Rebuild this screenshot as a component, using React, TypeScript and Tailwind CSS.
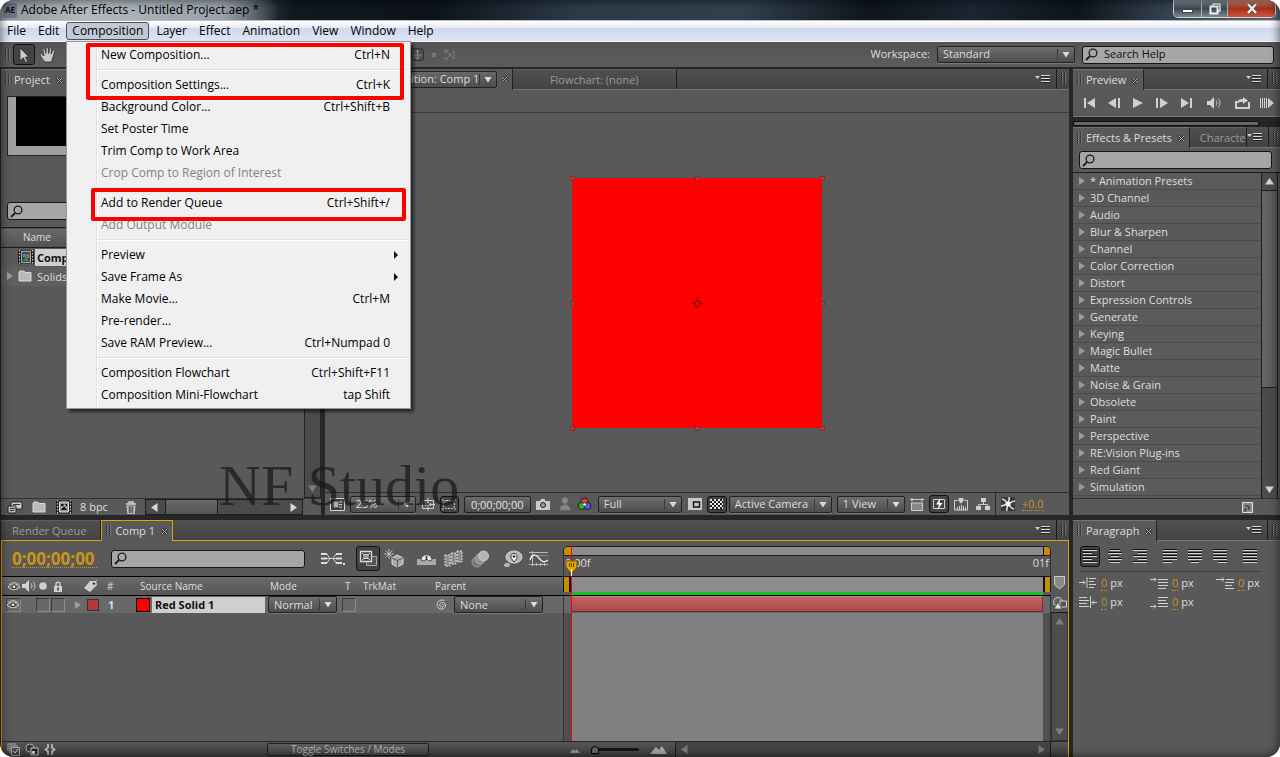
import type { ReactNode } from 'react';

type MenuEntry = { label: string; keys?: string; disabled?: boolean; submenu?: boolean } | 'separator';

const menus = ['File', 'Edit', 'Composition', 'Layer', 'Effect', 'Animation', 'View', 'Window', 'Help'];

const compositionMenu: MenuEntry[] = [
  { label: 'New Composition...', keys: 'Ctrl+N' },
  'separator',
  { label: 'Composition Settings...', keys: 'Ctrl+K' },
  { label: 'Background Color...', keys: 'Ctrl+Shift+B' },
  { label: 'Set Poster Time' },
  { label: 'Trim Comp to Work Area' },
  { label: 'Crop Comp to Region of Interest', disabled: true },
  'separator',
  { label: 'Add to Render Queue', keys: 'Ctrl+Shift+/' },
  { label: 'Add Output Module', disabled: true },
  'separator',
  { label: 'Preview', submenu: true },
  { label: 'Save Frame As', submenu: true },
  { label: 'Make Movie...', keys: 'Ctrl+M' },
  { label: 'Pre-render...' },
  { label: 'Save RAM Preview...', keys: 'Ctrl+Numpad 0' },
  'separator',
  { label: 'Composition Flowchart', keys: 'Ctrl+Shift+F11' },
  { label: 'Composition Mini-Flowchart', keys: 'tap Shift' },
];

const effects = [
  '* Animation Presets',
  '3D Channel',
  'Audio',
  'Blur & Sharpen',
  'Channel',
  'Color Correction',
  'Distort',
  'Expression Controls',
  'Generate',
  'Keying',
  'Magic Bullet',
  'Matte',
  'Noise & Grain',
  'Obsolete',
  'Paint',
  'Perspective',
  'RE:Vision Plug-ins',
  'Red Giant',
  'Simulation',
];

/* ---------- small drawings ---------- */

interface IconProps {
  w?: number;
  h?: number;
  className?: string;
  children: ReactNode;
}

function Icon({ w = 16, h = 16, className = '', children }: IconProps) {
  return (
    <svg
      width={w}
      height={h}
      viewBox={`0 0 ${w} ${h}`}
      fill="none"
      stroke="#d0d0d0"
      className={`shrink-0 ${className}`}
      aria-hidden="true"
    >
      {children}
    </svg>
  );
}

function Grip() {
  return (
    <Icon w={5} h={12}>
      <path d="M.5 0v12M3.500 0v12" stroke="#1c1c1c" strokeDasharray="1 1" />
      <path d="M1.500 0v12M4.500 0v12" stroke="#8c8c8c" strokeDasharray="1 1" />
    </Icon>
  );
}

function CloseX() {
  return (
    <Icon w={7} h={7}>
      <path d="M1 1l5 5M6 1l-5 5" stroke="#1e1e1e" strokeWidth="2" />
      <path d="M1 1l5 5M6 1l-5 5" stroke="#c4c4c4" strokeWidth="1" />
    </Icon>
  );
}

function PanelMenu() {
  return (
    <button aria-label="Panel menu" className="flex items-center">
      <Icon w={15} h={10}>
        <path d="M0 2h5L2.500 5z" fill="#d0d0d0" stroke="none" />
        <path d="M6 1.500h9M6 4.500h9M6 7.500h9" stroke="#d8d8d8" />
        <path d="M6 2.500h9M6 5.500h9M6 8.500h9" stroke="#222" />
      </Icon>
    </button>
  );
}

function Lens({ className = '' }: { className?: string }) {
  return (
    <Icon w={13} h={13} className={className}>
      <circle cx="8" cy="5" r="3.900" stroke="#1a1a1a" strokeWidth="1.300" />
      <path d="M5.200 7.800L1 12" stroke="#1a1a1a" strokeWidth="1.800" />
    </Icon>
  );
}

function Triangle() {
  return (
    <Icon w={6} h={8}>
      <path d="M0 0l6 4-6 4z" fill="#9c9c9c" stroke="none" />
    </Icon>
  );
}

type Dir = 'up' | 'down' | 'left' | 'right';

const arrowPaths: Record<Dir, string> = {
  up: 'M0 7.500L4.500 1 9 7.500z',
  down: 'M0 1.500L4.500 8 9 1.500z',
  left: 'M7.500 0L1 4.500 7.500 9z',
  right: 'M1.500 0L8 4.500 1.500 9z',
};

function Arrow({ dir, dim }: { dir: Dir; dim?: boolean }) {
  return (
    <Icon w={9} h={9}>
      <path d={arrowPaths[dir]} fill={dim ? '#7c7c7c' : '#d4d4d4'} stroke="none" />
    </Icon>
  );
}

function DropArrow() {
  return (
    <span className="pointer-events-none absolute inset-y-[2px] right-0 flex w-[17px] items-center border-l border-[#3a3a3a] pl-[4px]">
      <Icon w={9} h={7}>
        <path d="M.5 1h7L4 6.500z" fill="#dcdcdc" stroke="none" />
      </Icon>
    </span>
  );
}

function Eye() {
  return (
    <Icon w={12} h={9}>
      <path d="M0 5C2.500 1 9.500 1 12 5 9.500 8.500 2.500 8.500 0 5z" fill="#777" strokeWidth="1" />
      <circle cx="6" cy="4.800" r="2" fill="#e0e0e0" stroke="#222" />
      <path d="M1 2.500C4 0 8 0 11 2.500" stroke="#ccc" strokeWidth=".8" />
    </Icon>
  );
}

function Speaker() {
  return (
    <Icon w={14} h={12}>
      <path d="M0 4h3l4-4v12L3 8H0z" fill="#d4d4d4" stroke="none" />
      <path d="M9 3.500c1.300 1.500 1.300 3.500 0 5M11 1.500c2.600 2.500 2.600 6.500 0 9" />
    </Icon>
  );
}

/* ---------- building blocks ---------- */

interface TabProps {
  label: string;
  active?: boolean;
  accent?: boolean;
  className?: string;
}

function Tab({ label, active, accent, className = '' }: TabProps) {
  const look = active
    ? accent
      ? 'bg-[#595959] border border-b-0 border-[#e5a000] text-[#dedede] -mb-px'
      : 'bg-[#595959] border-t border-[#747474] border-r border-r-[#222] text-[#dedede] -mb-px'
    : 'border-t border-t-[#5e5e5e] border-r border-r-[#1c1c1c] text-[#9b9b9b]';
  return (
    <button className={`flex items-center gap-1 whitespace-nowrap px-1 text-[11px] leading-[18px] ${look} ${className}`}>
      {active && <Grip />}
      {label}
      {active && (
        <span className="pl-[2px]">
          <CloseX />
        </span>
      )}
    </button>
  );
}

function TabBar({ children, accent }: { children: ReactNode; accent?: boolean }) {
  return (
    <div
      className={`flex h-[21px] shrink-0 border-b bg-[linear-gradient(#505050,#434343)] ${
        accent ? 'border-[#e5a000]' : 'border-[#747474]'
      }`}
    >
      {children}
      <div className="ml-auto flex items-center gap-[6px] pr-[3px]">
        <PanelMenu />
        <span className="flex h-full items-center border-l border-[#1c1c1c] pl-[4px]">
          <Grip />
        </span>
      </div>
    </div>
  );
}

function Drop({ label, value, className = '' }: { label: string; value: string; className?: string }) {
  return (
    <label
      className={`relative flex h-[17px] shrink-0 items-center rounded-[2px] border border-[#222] bg-[linear-gradient(#6e6e6e,#4d4d4d)] shadow-[0_1px_0_#777] ${className}`}
    >
      <span className="sr-only">{label}</span>
      <select className="w-full appearance-none bg-transparent pl-[5px] text-[11px] text-[#dedede] outline-none">
        <option>{value}</option>
      </select>
      <DropArrow />
    </label>
  );
}

function SearchBox({ label, value, className = '' }: { label: string; value?: string; className?: string }) {
  return (
    <label
      className={`flex h-[18px] shrink-0 items-center gap-[6px] rounded-[3px] border border-[#151515] bg-[#a6a6a6] pl-[2px] ${className}`}
    >
      <Lens />
      <span className="sr-only">{label}</span>
      <input className="min-w-0 flex-1 bg-transparent text-[11px] text-[#111] outline-none" defaultValue={value} />
    </label>
  );
}

function Boxed({ label, className = '', children }: { label: string; className?: string; children: ReactNode }) {
  return (
    <button
      aria-label={label}
      className={`flex shrink-0 items-center justify-center rounded-[3px] border border-[#111] bg-[#434343] ${className}`}
    >
      {children}
    </button>
  );
}

/* ---------- window chrome ---------- */

function TitleBar() {
  return (
    <header className="flex h-[21px] shrink-0 border-b border-[#b5bcc4] bg-[linear-gradient(100deg,#7b8288_0%,#59616a_16%,#101820_23%,#0c131b_34%,#2c3a48_45%,#31404e_58%,#0d141c_68%,#1b2632_76%,#0d141c_84%,#3a4856_92%,#5a6570_100%)]">
      <div className="flex items-center rounded-r-full bg-[linear-gradient(90deg,#8b939a,#b2bac0_30%,#98a1a9_80%,rgba(60,68,76,0))] pl-[3px] pr-5">
        <span className="mr-[4px] flex h-[15px] w-[14px] items-center justify-center rounded-[2px] bg-[#6d7582] text-[8px] font-bold text-[#0d0f14]">
          AE
        </span>
        <h1 className="text-[12px] leading-[20px] text-black">Adobe After Effects - Untitled Project.aep *</h1>
      </div>
      <div className="ml-auto mr-1 flex h-[18px] overflow-hidden rounded-b-[5px] border border-t-0 border-[#cfd4d8]">
        <button
          aria-label="Minimize"
          className="flex w-[28px] items-center justify-center border-r border-[#aab2b9] bg-[linear-gradient(#8a949d,#3d4854_50%,#7b8793)]"
        >
          <span className="mt-1 h-[4px] w-[11px] border border-[#444] bg-white" />
        </button>
        <button
          aria-label="Restore"
          className="flex w-[26px] items-center justify-center border-r border-[#aab2b9] bg-[linear-gradient(#8a949d,#3d4854_50%,#7b8793)]"
        >
          <Icon w={12} h={12}>
            <path d="M4 3V1h7v7H9" stroke="#e8e8e8" strokeWidth="1.400" />
            <path d="M1.500 3.500h7v7h-7z" stroke="#f2f2f2" strokeWidth="2" />
          </Icon>
        </button>
        <button
          aria-label="Close"
          className="flex w-[47px] items-center justify-center bg-[linear-gradient(#c98a7d,#a8321c_50%,#c9563f)]"
        >
          <Icon w={12} h={11}>
            <path d="M2 1l8 9M10 1l-8 9" stroke="#444" strokeWidth="4" />
            <path d="M2 1l8 9M10 1l-8 9" stroke="#f2f2f2" strokeWidth="2.600" />
          </Icon>
        </button>
      </div>
    </header>
  );
}

function MenuBar() {
  return (
    <nav className="flex h-[21px] shrink-0 items-center border-b border-[#f4f4f4] bg-[linear-gradient(#ffffff,#e6eaf5_35%,#cfd8ec_36%,#dfe5f6)] pl-px">
      {menus.map((name) => (
        <button
          key={name}
          className={`h-[18px] rounded-[3px] border px-[5px] text-[12px] leading-[16px] text-black ${
            name === 'Composition' ? 'mx-px border-[#4c4f58] bg-[#c3c8d6]' : 'border-transparent'
          }`}
        >
          {name}
        </button>
      ))}
    </nav>
  );
}

function CompositionMenu() {
  return (
    <div className="absolute left-[66px] top-[41px] z-20 w-[345px] border border-[#979797] bg-[#f0f0f0] p-[2px] shadow-[3px_3px_3px_rgba(0,0,0,0.55)]">
      <ul
        role="menu"
        className="bg-[linear-gradient(90deg,transparent_27px,#e0e0e0_27px,#e0e0e0_28px,#fff_28px,#fff_29px,transparent_29px)]"
      >
        {compositionMenu.map((entry, i) =>
          entry === 'separator' ? (
            <li key={i} role="separator" className="ml-[28px] flex h-[8px] items-center">
              <span className="h-[2px] w-full border-b border-white bg-[#e0e0e0]" />
            </li>
          ) : (
            <li key={i}>
              <button
                role="menuitem"
                disabled={entry.disabled}
                className={`flex h-[22px] w-full items-center pl-[32px] pr-[18px] text-[12px] ${
                  entry.disabled ? 'text-[#838383]' : 'text-black'
                }`}
              >
                <span>{entry.label}</span>
                <span className="ml-auto">{entry.keys}</span>
                {entry.submenu && (
                  <Icon w={5} h={8} className="-mr-[9px]">
                    <path d="M0 0l4 4-4 4z" fill="#111" stroke="none" />
                  </Icon>
                )}
              </button>
            </li>
          ),
        )}
      </ul>
      {/* red callouts drawn over the menu */}
      <span className="absolute left-[19px] top-[1px] h-[57px] w-[318px] rounded-[2px] border-4 border-[#ff0000]" />
      <span className="absolute left-[24px] top-[146px] h-[33px] w-[315px] rounded-[2px] border-4 border-[#ff0000]" />
    </div>
  );
}

function ToolBar() {
  return (
    <div className="flex h-[25px] shrink-0 items-center bg-[linear-gradient(#555,#5b5b5b)] pl-[5px]">
      <Grip />
      <Boxed label="Selection tool" className="ml-[3px] h-[21px] w-[22px]">
        <Icon w={12} h={16}>
          <path d="M2 1l9 9H7.500l2 4.500-2 1-2-4.700L2 13.500z" fill="#c9c9c9" stroke="#222" strokeWidth=".7" />
        </Icon>
      </Boxed>
      <button aria-label="Hand tool" className="ml-[4px]">
        <Icon w={18} h={17}>
          <path
            d="M6 16C4 14 2 11 1 8.500c0-1.500 1.500-1.200 2.200 0L5 10 3.700 3.500C3.500 2 5.200 1.800 5.600 3.200L7 7.500V2c0-1.500 2-1.500 2.200 0l.4 5.500 1.200-5c.5-1.400 2-1 1.900.4L12 8l2-3.600c.8-1.200 2.200-.5 1.700.9L14 11c-.5 2-1 3.500-2 5z"
            fill="#c9c9c9"
            stroke="#333"
            strokeWidth=".8"
          />
        </Icon>
      </button>
      <div className="ml-[354px] flex items-center gap-[6px]">
        <Icon w={13} h={13}>
          <rect x=".5" y=".5" width="12" height="12" rx="2" fill="#4b4b4b" stroke="#333" />
          <path d="M6.500 2v9M4 8.500l2.500 3 2.500-3M2 7h9M5 4l1.500-2L8 4" stroke="#858585" />
        </Icon>
        <Icon w={8} h={8}>
          <circle cx="4" cy="4" r="3.500" fill="#777" stroke="#4a4a4a" />
        </Icon>
        <Icon w={12} h={11}>
          <path d="M1 1h4M1 1v4M1 1l9 9M10 1v9M3 9l6-6M1 8v2h3" stroke="#7e7e7e" />
        </Icon>
      </div>
      <div className="ml-auto flex items-center pr-[6px]">
        <span className="mr-[7px] text-[11px] text-[#dedede]">Workspace:</span>
        <Drop label="Workspace" value="Standard" className="w-[138px]" />
        <SearchBox label="Search help" value="Search Help" className="ml-[7px] w-[192px]" />
      </div>
    </div>
  );
}

/* ---------- panels ---------- */

function ProjectPanel() {
  return (
    <section className="flex w-1/4 shrink-0 flex-col bg-[#595959]">
      <TabBar>
        <Tab label="Project" active />
      </TabBar>
      <div className="flex h-[112px] shrink-0 items-start pl-[6px] pt-[6px]">
        <div className="h-[60px] w-[100px] border border-[#222] bg-[#a0a0a0] pb-[9px] pl-2">
          <div className="h-full bg-black" />
        </div>
      </div>
      <SearchBox label="Search project" className="ml-[6px] w-[240px]" />
      <div className="mt-[7px] flex min-h-0 flex-1">
        <table className="h-fit flex-1 border-collapse text-left">
          <thead>
            <tr className="h-[20px] border-y border-[#1c1c1c] bg-[linear-gradient(#6a6a6a,#525252)]">
              <th scope="col" className="pl-[22px] text-[10px] font-normal text-[#dedede]">
                Name
              </th>
            </tr>
          </thead>
          <tbody>
            <tr className="h-[19px]">
              <td>
                <div className="flex items-center pl-[17px] text-[11px] leading-[17px]">
                  <Icon w={16} h={14}>
                    <path d="M0 .5h16v13H0z" fill="#222" stroke="none" />
                    <path d="M1.500 0v14M14.500 0v14" stroke="#ccc" strokeDasharray="1.500 1.500" />
                    <path d="M3.500 1.500h9v11h-9z" fill="#3a4a4a" stroke="#ddd" strokeWidth=".7" />
                    <circle cx="6.500" cy="5.500" r="2" fill="#2a8fd0" stroke="none" />
                    <path d="M8.500 4h3v4h-3z" fill="#d05a2a" stroke="none" />
                    <path d="M5 11l3-3.500 3 3.500z" fill="#2aa043" stroke="none" />
                  </Icon>
                  <span className="ml-px flex-1 bg-[#cfcfcf] pl-[2px] font-bold text-[#111]">Comp 1</span>
                </div>
              </td>
            </tr>
            <tr className="h-[19px] bg-[#5f5f5f]">
              <td>
                <div className="flex items-center pl-[6px] text-[11px] leading-[17px] text-[#dedede]">
                  <Triangle />
                  <Icon w={14} h={12} className="ml-[5px]">
                    <path d="M1 11V2l1-1h4l1 1.500h6V11z" fill="#b9b9b9" stroke="#d8d8d8" />
                  </Icon>
                  <span className="ml-[5px]">Solids</span>
                </div>
              </td>
            </tr>
          </tbody>
        </table>
        <div className="flex w-[17px] flex-col justify-end border border-[#242424] bg-[#4b4b4b] pb-1 pl-[3px]">
          <Arrow dir="down" dim />
        </div>
      </div>
      <div className="flex h-[17px] shrink-0 items-center border-t border-[#333] pl-[6px] text-[11px] text-[#dedede]">
        <Icon w={16} h={13}>
          <path d="M4 1h11v7H4z" fill="#d0d0d0" stroke="#222" />
          <path d="M1 5h8v7H1z" fill="#bbb" stroke="#222" />
          <path d="M6 3.500h7M3 7.500h5M3 9.500h4" stroke="#333" />
        </Icon>
        <Icon w={14} h={12} className="ml-[9px]">
          <path d="M1 11V2l1-1h4l1 1.500h6V11z" fill="#b9b9b9" stroke="#d8d8d8" />
        </Icon>
        <Icon w={16} h={14} className="ml-[10px]">
          <path d="M0 .5h16v13H0z" fill="#222" stroke="none" />
          <path d="M1.500 0v14M14.500 0v14" strokeDasharray="1.500 1.500" />
          <path d="M3.500 2h9v10h-9z" fill="#999" stroke="#ddd" />
          <path d="M5 10l3-3.500 3 3.500zM5 4h2.500v2H5zM9 4h2v3z" fill="#111" stroke="none" />
        </Icon>
        <span className="ml-2">8 bpc</span>
        <Icon w={12} h={13} className="ml-[17px]">
          <path d="M1 3h10M4 2.500V1h4v1.500" strokeWidth="1.400" />
          <path d="M2 5h8l-1 8H3z" fill="#999" />
          <path d="M4.500 5v7M6 5v7M7.500 5v7" stroke="#444" strokeWidth=".7" />
        </Icon>
        <div className="ml-2 flex h-full flex-1 items-center border border-[#1c1c1c] bg-[#4b4b4b] pl-1">
          <Arrow dir="left" />
          <span className="ml-[6px] h-full w-[53px] border-x border-[#1c1c1c] bg-[linear-gradient(#666,#555)]" />
          <span className="ml-auto pr-[4px]">
            <Arrow dir="right" />
          </span>
        </div>
        <span className="w-[18px]" />
      </div>
    </section>
  );
}

function ViewerBar() {
  return (
    <div className="flex h-[23px] shrink-0 items-center gap-[5px] border-t border-[#2c2c2c] pl-[5px]">
      <Icon w={15} h={13}>
        <path d="M.5.500h14v12H.5z" fill="#444" />
        <path d="M3 3h6v7H3z" fill="#aaa" stroke="#222" />
        <path d="M9 4h3M9 6.500h3M9 9h3" />
      </Icon>
      <Drop label="Magnification" value="25%" className="w-[66px]" />
      <Icon w={14} h={13}>
        <path d="M1.500 2.500h11v8h-11zM7 0v13M0 6.500h14M4.500 5v3M9.500 5v3" />
      </Icon>
      <Boxed label="Mask visibility" className="h-[17px] w-[19px]">
        <Icon w={14} h={11}>
          <rect x="1.500" y="1.500" width="11" height="8" rx="3" stroke="#e0e0e0" strokeDasharray="2 1" />
          <path d="M0 1h2M0 10h2M12 1h2M12 10h2" />
        </Icon>
      </Boxed>
      <button className="h-[17px] w-[67px] shrink-0 rounded-[2px] border border-[#222] bg-[linear-gradient(#6a6a6a,#4d4d4d)] text-center text-[11px] leading-[15px] text-[#e2e2e2]">
        0;00;00;00
      </button>
      <Icon w={14} h={13}>
        <path d="M0 3h4l1-2h4v2h5v9H0z" fill="#c9c9c9" stroke="none" />
        <circle cx="7" cy="7" r="2.500" fill="#999" stroke="#222" />
      </Icon>
      <Icon w={14} h={14} className="ml-[3px]">
        <circle cx="7" cy="3.500" r="3" fill="#888" stroke="#777" />
        <path d="M2 13c0-7 10-7 10 0z" fill="#888" stroke="#777" />
      </Icon>
      <Icon w={16} h={14}>
        <circle cx="7.500" cy="4.500" r="3.500" fill="#e0403a" stroke="#222" />
        <circle cx="4.500" cy="9" r="3.500" fill="#34a833" stroke="#222" />
        <circle cx="10.500" cy="9" r="3.500" fill="#5555e0" stroke="#222" />
        <circle cx="7.500" cy="7.500" r="1.300" fill="#fff" stroke="none" />
      </Icon>
      <Drop label="Resolution" value="Full" className="w-[84px]" />
      <Icon w={14} h={12} className="ml-px">
        <path d="M0 0h14v12H0z" fill="#c9c9c9" stroke="none" />
        <path d="M5.500 4h6v5h-6z" stroke="#111" strokeWidth="1.400" />
      </Icon>
      <Boxed label="Transparency grid" className="h-[17px] w-[20px]">
        <Icon w={13} h={11}>
          <path d="M0 0h13v11H0z" fill="#222" stroke="none" />
          <path d="M0 1h13M0 5h13M0 9h13" stroke="#e5e5e5" strokeWidth="2" strokeDasharray="2 2" />
          <path d="M2 3h11M2 7h11" stroke="#e5e5e5" strokeWidth="2" strokeDasharray="2 2" />
        </Icon>
      </Boxed>
      <div className="-ml-[3px] flex gap-[5px]">
        <Drop label="3D view" value="Active Camera" className="w-[103px]" />
        <Drop label="View layout" value="1 View" className="w-[68px]" />
      </div>
      <Icon w={14} h={13}>
        <path d="M0 1.500h14M2 0v4M12 0v4" />
        <path d="M1.500 5h11v7.500h-11z" fill="#888" />
      </Icon>
      <Boxed label="Fast previews" className="h-[18px] w-[20px]">
        <Icon w={14} h={13}>
          <path d="M1.500 1.500h11v9h-11z" />
          <path d="M8.500 0L4 6.500h3L5.500 12l5-7H7.500z" fill="#fff" stroke="none" />
        </Icon>
      </Boxed>
      <Icon w={14} h={13}>
        <path d="M.5 2.500V12h13V2.500h-3M.5 2.500h3M3.500 12V9M5.500 12V8M7.500 12V7M9.500 12V8M11.500 12V9" />
        <path d="M4.500 0h5v3L7 5.500 4.500 3z" fill="#d0d0d0" stroke="none" />
      </Icon>
      <Icon w={14} h={13} className="ml-[3px]">
        <path d="M5 0h5v4H5zM0 8h5v4H0zM9 8h5v4H9z" fill="#d0d0d0" stroke="none" />
        <path d="M7.500 4v2.500M2.500 8V6.500h9V8" />
      </Icon>
      <span className="h-full border-l border-[#2c2c2c]" />
      <Icon w={14} h={14}>
        <path d="M0 0h14v14H0z" fill="#3a3a3a" stroke="none" />
        <path
          d="M7 7C5 5 5 3 1 2M7 7c0-3 2-4 1-7M7 7c3-1 4-3 7-3M7 7c2 1 2 4 6 5M7 7c0 3-2 4-1 7M7 7C4 7 3 9 0 9"
          stroke="#e5e5e5"
          strokeWidth="1.500"
        />
        <circle cx="7" cy="7" r="2.500" fill="#fff" stroke="none" />
      </Icon>
      <span className="ml-[2px] border-b border-dotted border-[#c8941a] text-[11px] leading-[12px] text-[#c8941a]">
        +0.0
      </span>
    </div>
  );
}

const handles = [
  '-left-[2px] -top-[2px]',
  'left-[123px] -top-[2px]',
  '-right-[3px] -top-[2px]',
  '-left-[2px] top-[123px]',
  '-right-[3px] top-[123px]',
  '-left-[2px] -bottom-[3px]',
  'left-[123px] -bottom-[3px]',
  '-right-[3px] -bottom-[3px]',
];

function Viewer() {
  return (
    <section className="flex min-w-0 flex-1 flex-col bg-[#595959]">
      <TabBar>
        <div className="-mb-px flex items-center border-r border-[#222] bg-[#595959] pl-[20px] pr-1">
          <label className="relative flex h-[17px] w-[152px] items-center rounded-[2px] border border-[#222] bg-[linear-gradient(#686868,#4d4d4d)]">
            <span className="sr-only">Viewed composition</span>
            <select className="w-full appearance-none bg-transparent pl-[23px] text-[11px] text-[#dedede] outline-none">
              <option>Composition: Comp 1</option>
            </select>
            <DropArrow />
          </label>
          <span className="pl-1">
            <CloseX />
          </span>
        </div>
        <Tab label="Flowchart: (none)" className="w-[164px] justify-center" />
      </TabBar>
      <div className="h-[23px] shrink-0 border-b border-[#3a3a3a]" />
      <div className="flex min-h-0 flex-1 items-center justify-center">
        <div className="relative flex size-[250px] items-center justify-center bg-[#ff0000]">
          {handles.map((pos) => (
            <span key={pos} className={`absolute size-[5px] border border-[#8a2c2c] bg-[#b33a3a] ${pos}`} />
          ))}
          <Icon w={12} h={12}>
            <circle cx="6.500" cy="6.500" r="3" stroke="#7a1010" />
            <path d="M6.500 0v5M6.500 8v4M0 6.500h5M8 6.500h4" stroke="#7a1010" />
          </Icon>
        </div>
      </div>
      <ViewerBar />
    </section>
  );
}

const transport: { label: string; path: string }[] = [
  { label: 'First frame', path: 'M1 1h2v10H1zM12 1v10L4 6z' },
  { label: 'Previous frame', path: 'M11 1h2v10h-2zM9 1v10L1 6z' },
  { label: 'Play', path: 'M2 1l10 5-10 5z' },
  { label: 'Next frame', path: 'M1 1h2v10H1zM5 1l8 5-8 5z' },
  { label: 'Last frame', path: 'M2 1l8 5-8 5zM11 1h2v10h-2z' },
];

function PreviewPanel() {
  return (
    <section className="flex h-[48px] shrink-0 flex-col border-b border-[#777] bg-[#595959]">
      <TabBar>
        <Tab label="Preview" active />
      </TabBar>
      <div className="flex flex-1 items-center gap-[10px] pl-[10px]">
        {transport.map(({ label, path }) => (
          <button key={label} aria-label={label}>
            <Icon w={14} h={12}>
              <path d={path} fill="#d0d0d0" stroke="none" />
            </Icon>
          </button>
        ))}
        <button aria-label="Mute audio" className="ml-[4px]">
          <Speaker />
        </button>
        <button aria-label="Loop" className="ml-[4px]">
          <Icon w={15} h={12}>
            <path d="M4 5H1v6h13V5" strokeWidth="2" />
            <path d="M3 4c1-2 3-2 5-2V0l5 3.500L8 7V5H3z" fill="#d0d0d0" stroke="none" />
          </Icon>
        </button>
        <button aria-label="RAM preview">
          <Icon w={14} h={12}>
            <path d="M.5 1v10M2.500 1v10M4.500 1v10M6.500 1v10" />
            <path d="M8 1l6 5-6 5z" fill="#d0d0d0" stroke="none" />
          </Icon>
        </button>
      </div>
    </section>
  );
}

function EffectsPanel() {
  return (
    <section className="flex min-h-0 flex-1 flex-col bg-[#595959]">
      <TabBar>
        <Tab label="Effects & Presets" active />
        <Tab label="Characte" className="pl-[10px] pr-0" />
      </TabBar>
      <SearchBox label="Search effects" className="mx-[6px] my-[3px] mr-[8px]" />
      <div className="flex min-h-0 flex-1 border-t border-[#1c1c1c]">
        <ul className="min-w-0 flex-1">
          {effects.map((name) => (
            <li key={name} className="border-b border-[#4a4a4a] odd:bg-[#5b5b5b]">
              <button className="flex h-[16px] items-center gap-[5px] pl-[6px] text-[11px] text-[#dedede]">
                <Triangle />
                {name}
              </button>
            </li>
          ))}
        </ul>
        <div className="mr-[2px] flex w-[17px] flex-col items-center border-x border-[#1c1c1c] bg-[#4b4b4b]">
          <span className="flex h-[17px] items-center">
            <Arrow dir="up" />
          </span>
          <span className="h-[198px] w-full border-y border-[#1c1c1c] bg-[linear-gradient(90deg,#666,#555)]" />
          <span className="mt-auto flex h-[17px] items-center">
            <Arrow dir="down" />
          </span>
        </div>
      </div>
      <div className="flex h-[17px] shrink-0 items-center justify-end border-t border-[#333] pr-[27px]">
        <Icon w={11} h={11}>
          <path d="M.5.500h10v10H.5z" fill="#888" stroke="#e0e0e0" />
          <path d="M3 4h4v4M3 10V7h2" stroke="#222" />
        </Icon>
      </div>
    </section>
  );
}

function ParagraphIcon({ lines }: { lines: number[][] }) {
  return (
    <Icon w={15} h={15}>
      {lines.map(([x, w], i) => (
        <g key={i}>
          <path d={`M${x} ${i * 3 + 0.5}h${w}`} stroke="#111" />
          <path d={`M${x} ${i * 3 + 1.5}h${w}`} stroke="#d4d4d4" />
        </g>
      ))}
    </Icon>
  );
}

const paragraphAligns = [
  { label: 'Left align', lines: [[0, 14], [0, 9], [0, 14], [0, 9], [0, 14]] },
  { label: 'Center text', lines: [[2, 10], [0, 14], [3, 8], [0, 14], [2, 10]] },
  { label: 'Right align', lines: [[0, 14], [5, 9], [0, 14], [5, 9], [0, 14]] },
  { label: 'Justify last left', lines: [[0, 14], [0, 14], [0, 14], [0, 14], [0, 9]] },
  { label: 'Justify last centered', lines: [[0, 14], [0, 14], [0, 14], [0, 14], [3, 8]] },
  { label: 'Justify last right', lines: [[0, 14], [0, 14], [0, 14], [0, 14], [5, 9]] },
  { label: 'Justify all', lines: [[0, 14], [0, 14], [0, 14], [0, 14], [0, 14]] },
];

const indents = [
  { label: 'Indent left margin', path: 'M0 5.500h6M4 3.500l2 2-2 2M8 0v11M10 1.500h7M10 4.500h5M10 7.500h7M10 10.500h5' },
  { label: 'Space before', path: 'M0 2.500h6M4 .5l2 2-2 2M8 2.500h10M8 5.500h10M8 8.500h10M8 11.500h8' },
  { label: 'First line indent', path: 'M0 2.500h8M6 .5l2 2-2 2M10 2.500h8M9 5.500h9M9 8.500h7M9 11.500h9' },
  { label: 'Indent right margin', path: 'M0 1.500h8M0 4.500h10M0 7.500h8M0 10.500h10M11.500 0v12M13 6.500h5M15 4.500l-2 2 2 2' },
  { label: 'Space after', path: 'M8 1.500h10M8 4.500h8M8 7.500h10M8 10.500h10M0 10.500h6M4 8.500l2 2-2 2' },
];

function ParagraphPanel() {
  return (
    <section className="flex w-[207px] shrink-0 flex-col bg-[#595959]">
      <TabBar>
        <Tab label="Paragraph" active />
      </TabBar>
      <div className="ml-[7px] mr-[20px] flex h-[31px] items-center border-b border-[#3c3c3c]">
        <Boxed label={paragraphAligns[0].label} className="h-[21px] w-[20px]">
          <ParagraphIcon lines={paragraphAligns[0].lines} />
        </Boxed>
        {[paragraphAligns.slice(1, 3), paragraphAligns.slice(3, 6), paragraphAligns.slice(6)].map((group, i) => (
          <div key={i} className={`flex gap-[10px] ${i === 0 ? 'ml-[8px]' : 'ml-[15px]'}`}>
            {group.map(({ label, lines }) => (
              <button key={label} aria-label={label}>
                <ParagraphIcon lines={lines} />
              </button>
            ))}
          </div>
        ))}
      </div>
      <div className="grid grid-cols-[71px_66px_60px] gap-y-[5px] pl-[6px] pt-[4px]">
        {indents.map(({ label, path }) => (
          <div key={label} className="flex h-[14px] items-center gap-[4px] text-[11px] leading-[12px] text-[#dedede]">
            <Icon w={18} h={13}>
              <path d={path} />
            </Icon>
            <span>
              <span className="border-b border-dotted border-[#c8941a] text-[#c8941a]">0</span> px
            </span>
          </div>
        ))}
      </div>
    </section>
  );
}

/* ---------- timeline ---------- */

function TimelineTools() {
  return (
    <div className="flex h-[35px] shrink-0 items-center pl-[10px]">
      <span className="w-[85px] border-b border-dotted border-[#c8941a] text-[17px] font-bold leading-[17px] text-[#c8941a]">
        0;00;00;00
      </span>
      <SearchBox label="Search layers" className="ml-[14px] w-[194px]" />
      <Icon w={24} h={15} className="ml-[16px]">
        <path d="M0 3h6M0 7.500h6M0 12h6M15 3h6M15 7.500h6M15 12h6" stroke="#ddd" strokeWidth="2" />
        <path d="M6 3l3 4.500L6 12M15 3l-3 4.500 3 4.500M6 7.500h9" />
        <path d="M22 12h2v2h-2z" fill="#ddd" stroke="none" />
      </Icon>
      <Boxed label="Live update" className="ml-[11px] h-[25px] w-[24px]">
        <Icon w={18} h={17}>
          <path d="M7.500 6.500h10v9h-10z" fill="#555" stroke="#aaa" />
          <path d="M1.500 1.500h11v10h-11z" fill="#444" stroke="#ddd" strokeWidth="1.300" />
          <path d="M3 3l8 7M11 3l-8 7M5 4.500h4v4H5z" />
        </Icon>
      </Boxed>
      <Icon w={20} h={19} className="ml-[4px]">
        <path d="M5 0v10M0 5h10M1.500 1.500l7 7M8.500 1.500l-7 7" strokeWidth=".8" />
        <path d="M8 9l5-3 6 3v6l-6 3-5-3z" fill="#aaa" stroke="#ddd" />
        <path d="M8 9l5.500 2.500L19 9M13.500 11.500V18" stroke="#555" />
      </Icon>
      <Icon w={20} h={14} className="ml-[13px]">
        <path d="M0 7h19v6H0z" fill="#a9a9a9" stroke="none" />
        <path d="M4 8c0-7 11-7 11 0l-3 1-2.500-2L7 9z" fill="#e5e5e5" stroke="#333" strokeWidth=".8" />
        <path d="M9.500 4v4" stroke="#333" strokeWidth="1.500" />
      </Icon>
      <Icon w={20} h={17} className="ml-[7px]">
        <path d="M1 5h5v11H1zM7 3h5v11H7zM13 1h5v11h-5z" fill="#8c8c8c" stroke="#ddd" strokeDasharray="2 1" />
      </Icon>
      <Icon w={19} h={18} className="ml-[7px]">
        <circle cx="6" cy="12" r="5" fill="#777" stroke="#999" />
        <circle cx="9" cy="9" r="5" fill="#909090" stroke="#aaa" />
        <circle cx="12.500" cy="6" r="5" fill="#b5b5b5" stroke="#ccc" />
      </Icon>
      <Icon w={20} h={18} className="ml-[13px]">
        <ellipse cx="11" cy="7" rx="8" ry="6" fill="#b5b5b5" stroke="#d8d8d8" />
        <ellipse cx="4" cy="15" rx="3" ry="2" fill="#b5b5b5" stroke="none" />
        <path d="M11 12c-5-5-3-8.500 0-8.500s5 3.500 0 8.500z" fill="#fff" stroke="#333" />
        <circle cx="11" cy="6.500" r="1.300" fill="#222" stroke="none" />
      </Icon>
      <Icon w={20} h={16} className="ml-[6px]">
        <path d="M0 1.500h19M0 13.500h19M3.500 0v15M7.500 12v3M11.500 12v3M15.500 12v3" stroke="#bbb" />
        <path d="M1 4.500h18" stroke="#888" />
        <path d="M1 9C3 3 7 3 10 7s5 5 9 2" stroke="#eee" strokeWidth="1.300" />
      </Icon>
    </div>
  );
}

function LayerTable() {
  const head = 'border-y border-black px-1 text-left text-[10px] font-normal text-[#dedede]';
  return (
    <table className="w-full table-fixed border-collapse">
      <colgroup>
        <col className="w-[69px]" />
        <col className="w-[32px]" />
        <col className="w-[33px]" />
        <col className="w-[130px]" />
        <col className="w-[75px]" />
        <col className="w-[18px]" />
        <col className="w-[72px]" />
        <col />
      </colgroup>
      <thead>
        <tr className="h-[19px] bg-[linear-gradient(#6b6b6b,#555)]">
          <th scope="col" aria-label="Switches" className={head}>
            <div className="flex items-center gap-[2px] pl-[2px]">
              <Eye />
              <Speaker />
              <Icon w={10} h={10}>
                <circle cx="5" cy="5" r="3.800" fill="#d0d0d0" stroke="none" />
              </Icon>
              <Icon w={10} h={11} className="ml-[3px]">
                <path d="M3 5V3c0-2.500 4-2.500 4 0v2" strokeWidth="1.500" />
                <path d="M1 5h8v6H1z" fill="#d0d0d0" stroke="none" />
                <path d="M5 6.500v3" stroke="#333" strokeWidth="1.500" />
              </Icon>
            </div>
          </th>
          <th scope="col" aria-label="Label" className={head}>
            <Icon w={15} h={14} className="ml-[8px]">
              <path d="M1 9l6-7h6l1 4-7 7z" fill="#cfcfcf" stroke="none" />
              <circle cx="11" cy="4.500" r="1.300" fill="#333" stroke="none" />
              <path d="M11 4l3-3" />
            </Icon>
          </th>
          <th scope="col" className={head}>
            #
          </th>
          <th scope="col" className={head}>
            Source Name
          </th>
          <th scope="col" className={head}>
            Mode
          </th>
          <th scope="col" className={head}>
            T
          </th>
          <th scope="col" className={head}>
            TrkMat
          </th>
          <th scope="col" className={head}>
            Parent
          </th>
        </tr>
      </thead>
      <tbody>
        <tr className="h-[17px] bg-[#686868] text-[11px] leading-[16px] text-[#dedede]">
          <td>
            <div className="flex items-center pl-[4px]">
              <span className="flex h-[14px] w-[15px] items-center border border-[#888] border-l-[#444] border-t-[#444]">
                <Eye />
              </span>
              <span className="ml-[15px] size-[14px] border border-[#8c8c8c] border-l-[#3c3c3c] border-t-[#3c3c3c]" />
              <span className="ml-px size-[14px] border border-[#8c8c8c] border-l-[#3c3c3c] border-t-[#3c3c3c]" />
            </div>
          </td>
          <td>
            <div className="flex items-center gap-[6px] pl-[4px]">
              <Triangle />
              <span className="size-[12px] border border-[#333] bg-[#b33a3a]" />
            </div>
          </td>
          <td className="pl-[5px] font-bold">1</td>
          <td>
            <div className="flex items-center gap-[2px]">
              <span className="size-[14px] border border-black bg-[#ff0000]" />
              <span className="mr-px flex-1 bg-[#cfcfcf] pl-[3px] font-bold text-[#111]">Red Solid 1</span>
            </div>
          </td>
          <td className="pl-[2px]">
            <Drop label="Blending mode" value="Normal" className="h-[14px] w-[69px]" />
          </td>
          <td>
            <div className="ml-px size-[14px] border border-[#8c8c8c] border-l-[#3c3c3c] border-t-[#3c3c3c]" />
          </td>
          <td />
          <td>
            <div className="flex items-center gap-[6px] pl-[5px]">
              <Icon w={12} h={12}>
                <path d="M6 6c1-1.500 2.500.500 1 1.500-2 1.500-4-.5-3-2.500C5 2.500 9 3 9.500 6c.5 3-3 4.500-5.500 4C1 9 .5 5 2 3s4.500-2.500 6.500-1.500" />
              </Icon>
              <Drop label="Parent layer" value="None" className="h-[14px] w-[89px]" />
            </div>
          </td>
        </tr>
      </tbody>
    </table>
  );
}

function TimeGraph() {
  return (
    <div className="relative flex min-w-0 flex-1 flex-col">
      <div className="mt-[5px] flex h-[10px] overflow-hidden rounded-t-[5px] border border-[#1c1c1c] bg-[#8c8c8c]">
        <span className="w-[8px] border-r border-[#111] bg-[#c49000]" />
        <span className="ml-auto w-[7px] border-l border-[#111] bg-[#c49000]" />
      </div>
      <div className="flex h-[20px] justify-between border-x border-[#333] px-px text-[11px] leading-[14px] text-[#dedede]">
        <span>0:00f</span>
        <span>01f</span>
      </div>
      <div className="flex h-[16px] border border-b-0 border-[#111] bg-[#8c8c8c]">
        <span className="w-[7px] border-x-2 border-x-[#c49000] border-r-[#111] bg-[#c49000]" />
        <span className="ml-auto w-[7px] border-x-2 border-x-[#111] border-r-[#c49000] bg-[#c49000]" />
      </div>
      <div className="h-[4px] border-b border-black px-[8px]">
        <div className="h-[3px] bg-[#18c028]" />
      </div>
      <div className="flex min-h-0 flex-1 flex-col border-x border-[#333]">
        <div className="h-[17px] bg-[#686868] px-[7px] pb-px">
          <div className="h-full border border-x-[#7c2c2c] border-b-[#6a2828] border-t-[#d08080] bg-[linear-gradient(#c06464,#ae4949)]" />
        </div>
        <div className="min-h-0 flex-1 bg-[#505050] px-[7px]">
          <div className="h-full bg-[#808080]" />
        </div>
      </div>
      {/* playhead */}
      <span className="absolute bottom-0 left-[8px] top-[5px] w-px bg-[#ff0000]" />
      <Icon w={13} h={16} className="absolute left-[2px] top-[19px]">
        <path d="M1 1h11v6l-5.500 7L1 7z" fill="#e5a800" stroke="#7a5800" />
        <path d="M4.500 3v4M6.500 3v4M8.500 3v4" stroke="#5a4000" />
        <path d="M6.500 9v7" stroke="#fff" />
      </Icon>
    </div>
  );
}

function TimelineFooter() {
  return (
    <div className="flex h-[16px] shrink-0 items-center border-t border-[#2a2a2a] bg-[linear-gradient(#555,#404040)]">
      <div className="flex min-w-0 flex-1 basis-0 items-center gap-[5px] pl-[5px]">
        <Icon w={13} h={13}>
          <path d="M9 1H1v7M11 3H3v7M4.500 4.500h8v8h-8z" stroke="#aaa" />
          <path d="M6 8l2 2 3-4" />
        </Icon>
        <Icon w={14} h={13}>
          <circle cx="5" cy="5" r="4" fill="#333" stroke="#aaa" />
          <path d="M6 5h7v7H6z" fill="#222" stroke="#ccc" />
          <path d="M7 8h3v3H7z" fill="#ccc" stroke="none" />
        </Icon>
        <Icon w={12} h={13}>
          <path d="M4 1v3.500L1.500 6.500 4 8.500V12M8 1v3.500l2.500 2L8 8.500V12" stroke="#bbb" strokeWidth="1.800" />
        </Icon>
      </div>
      <button className="h-[13px] w-[162px] rounded-[2px] border border-[#1c1c1c] bg-[linear-gradient(#5c5c5c,#464646)] text-[10px] leading-[11px] text-[#b4b4b4]">
        Toggle Switches / Modes
      </button>
      <div className="flex w-[246px] items-center justify-end pr-[8px]">
        <Icon w={10} h={6}>
          <path d="M0 6l3-4 2 2 1.500-2L10 6z" fill="#999" stroke="none" />
        </Icon>
        <label className="mx-[11px] flex items-center">
          <span className="sr-only">Time zoom</span>
          <input
            type="range"
            defaultValue={0}
            className="h-[3px] w-[48px] appearance-none rounded bg-[#161616] [&::-webkit-slider-thumb]:h-[8px] [&::-webkit-slider-thumb]:w-[8px] [&::-webkit-slider-thumb]:appearance-none [&::-webkit-slider-thumb]:rounded-t-full [&::-webkit-slider-thumb]:border [&::-webkit-slider-thumb]:border-black [&::-webkit-slider-thumb]:bg-[#666]"
          />
        </label>
        <Icon w={17} h={9}>
          <path d="M0 9l6-7 3 3 3-4 5 8z" fill="#aaa" stroke="none" />
        </Icon>
      </div>
      <div className="flex h-full w-[376px] items-center justify-between border-x border-[#1c1c1c] bg-[#444] px-1">
        <Arrow dir="left" dim />
        <Arrow dir="right" dim />
      </div>
      <span className="w-[17px]" />
    </div>
  );
}

function Timeline() {
  return (
    <section className="flex min-w-0 flex-1 flex-col bg-[#595959]">
      <TabBar accent>
        <Tab label="Render Queue" className="pl-[11px] pr-[14px]" />
        <Tab label="Comp 1" active accent />
      </TabBar>
      <div className="flex min-h-0 flex-1 flex-col border-x border-[#e5a000]">
        <div className="flex min-h-0 flex-1">
          <div className="w-[561px] shrink-0">
            <TimelineTools />
            <LayerTable />
          </div>
          <TimeGraph />
          <div className="flex w-[17px] shrink-0 flex-col items-center pt-[35px]">
            <Icon w={11} h={14}>
              <path d="M.5.500h10v8L5.500 13l-5-4.500z" fill="#888" stroke="#ccc" />
            </Icon>
            <span className="flex h-[23px] w-full items-end justify-center border-b border-[#1c1c1c] pb-[2px]">
              <Icon w={14} h={13}>
                <circle cx="5" cy="5" r="4.500" fill="#666" />
                <path d="M7 4h6.500v6H7z" fill="#555" />
                <path d="M1 12l4-7 4 7z" fill="#ddd" stroke="#333" strokeWidth=".7" />
              </Icon>
            </span>
            <div className="flex w-full flex-1 flex-col items-center justify-between border border-t-0 border-[#333] bg-[#4d4d4d] py-[4px]">
              <Arrow dir="up" dim />
              <Arrow dir="down" dim />
            </div>
          </div>
        </div>
        <TimelineFooter />
      </div>
    </section>
  );
}

export default function App() {
  return (
    <div className="bg-white">
      <div className="relative flex h-screen flex-col overflow-hidden rounded-[14px] bg-[#262626] font-['Open_Sans','Noto_Sans',sans-serif]">
        <TitleBar />
        <MenuBar />
        <ToolBar />
        <main className="flex min-h-0 flex-1 flex-col gap-[5px] pt-[2px]">
          <div className="flex min-h-0 flex-[446_1_0] gap-1 pl-px">
            <ProjectPanel />
            <Viewer />
            <aside className="flex w-[207px] shrink-0 flex-col">
              <PreviewPanel />
              <div className="mb-px mr-[21px] mt-[4px] h-[5px] shrink-0 border border-[#111] bg-[#666]" />
              <EffectsPanel />
            </aside>
          </div>
          <div className="flex min-h-0 flex-[237_1_0] gap-1 pl-px">
            <Timeline />
            <ParagraphPanel />
          </div>
        </main>
        <CompositionMenu />
        <div className="pointer-events-none absolute left-[219px] top-[446px] z-10 whitespace-nowrap font-['Liberation_Serif',serif] text-[58px] leading-[80px] text-[#1a1a1a]/75">
          NF Studio
        </div>
        <div className="pointer-events-none absolute inset-0 z-30 rounded-[14px] shadow-[inset_0_0_10px_1px_rgba(0,0,0,0.55)]" />
      </div>
    </div>
  );
}
